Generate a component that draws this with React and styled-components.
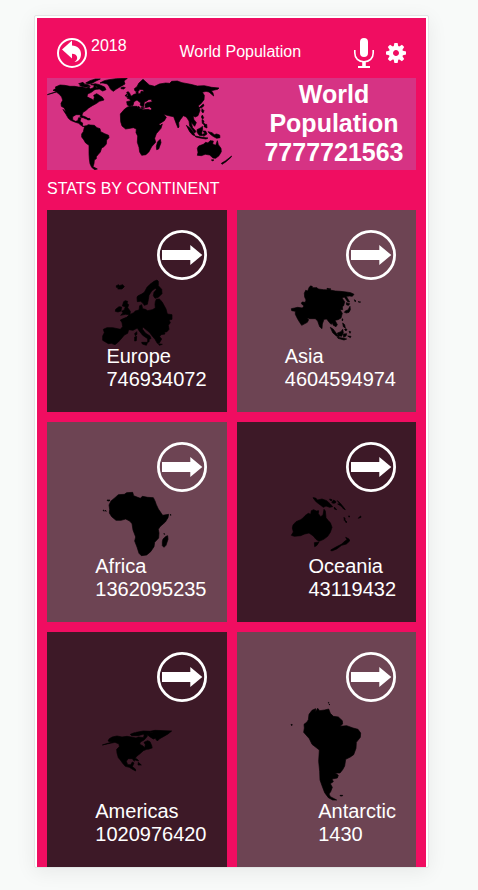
import React from 'react';
import styled, { createGlobalStyle } from 'styled-components';

const GlobalStyle = createGlobalStyle`
  * { box-sizing: border-box; }
  body {
    margin: 0;
    background: #f8faf9;
    color: #fff;
    font-family: "Liberation Sans", Arial, sans-serif;
  }
`;

const Page = styled.div`
  min-height: 100vh;
  padding: 15px 49px 22px 34px;
`;

const Frame = styled.div`
  height: calc(100vh - 37px);
  border: 1px solid #e2e5e4;
  border-radius: 2px;
  background: #fff;
  padding: 2px 2px 0;
  box-shadow: 0 4px 20px rgba(0, 0, 0, 0.07);
`;

const Screen = styled.main`
  height: 100%;
  overflow: hidden;
  padding: 0 10px;
  background: #f00d61;
`;

const Header = styled.header`
  display: flex;
  align-items: center;
  justify-content: space-between;
  padding: 20px 10px 10px;
  font-size: 16px;
  line-height: 18px;
`;

const BackLink = styled.a`
  display: flex;
  gap: 4px;
  color: inherit;
  line-height: 16px;
  text-decoration: none;
`;

const Title = styled.h1`
  margin: 0;
  padding-bottom: 2px;
  font-size: 16px;
  font-weight: 400;
`;

const Tools = styled.div`
  display: flex;
  align-items: center;
  gap: 12px;
`;

const IconButton = styled.button`
  display: block;
  padding: 0;
  border: 0;
  background: none;
  color: #fff;
  cursor: pointer;
`;

const Icon = styled.svg`
  display: block;
  flex: none;
  width: ${({ $w }) => $w}px;
  height: ${({ $h }) => $h}px;
`;

const Banner = styled.section`
  display: flex;
  align-items: center;
  background: #d63384;
`;

const BannerText = styled.h2`
  flex: 1;
  margin: 0;
  padding: 0 0 2px 20px;
  font-size: 25px;
  line-height: 29px;
  text-align: center;
`;

const BannerLine = styled.span`
  display: block;
`;

const SectionTitle = styled.h3`
  margin: 0;
  padding: 10px 0 12px;
  font-size: 16px;
  font-weight: 400;
  line-height: 18px;
`;

const Grid = styled.section`
  display: grid;
  grid-template-columns: 1fr 1fr;
  gap: 10px;
`;

const Card = styled.article`
  display: flex;
  flex-direction: column;
  justify-content: space-between;
  padding: 20px 20px 21px;
  background: ${({ $dark }) => ($dark ? '#3d1927' : '#6d4453')};
`;

const OpenButton = styled(IconButton)`
  align-self: flex-end;
`;

const MapShape = styled(Icon)`
  align-self: center;
  overflow: visible;
`;

const Land = styled.path`
  fill: #000;
  stroke: #000;
  stroke-width: 2;
  stroke-linejoin: round;
`;

const CardText = styled.div`
  align-self: flex-end;
  font-size: 20px;
  line-height: 23px;
`;

const Name = styled.h4`
  margin: 0;
  font-size: inherit;
  font-weight: 400;
`;

const Count = styled.p`
  margin: 0;
`;

const WORLD = `
M10 59L25 54L38 50L27 46L36 40L34 36L48 30L62 31L78 34L92 34L104 36L116 36L126 40L135 36L139 42L148 38L152 30L160 41L151 45L142 52L131 57L129 65L138 70L145 73L148 78L151 67L149 61L158 56L166 61L176 68L180 75L166 79L158 85L145 92L134 99L125 107L117 112L114 120L116 128L111 126L108 119L96 119L86 125L86 134L94 139L101 137L104 128L111 130L108 139L116 144L115 154L126 153L120 155L111 151L104 145L92 141L80 136L73 130L66 118L59 107L57 103L66 112L61 99L52 94L51 85L56 76L53 66L46 58L37 51Z
M107 32L118 27L132 29L139 34L125 37ZM104 26L117 22L121 27L110 30ZM125 24L138 17L154 12L169 12L156 18L144 25L135 27ZM140 29L154 26L166 29L182 36L186 44L176 48L166 42L158 43L160 36L151 31ZM163 67L173 66L176 73L167 74Z
M168 24L181 17L195 14L217 11L250 10L240 18L243 27L229 35L216 43L208 49L200 43L195 34L190 27L177 24Z
M230 39L237 36L244 38L239 42L232 41ZM107 126L117 123L127 127L134 132L126 132L115 127ZM129 132L137 130L139 134L131 135Z
M126 153L133 149L139 150L151 151L159 158L168 161L170 170L182 176L194 181L195 188L188 195L187 207L180 215L173 219L169 231L163 238L157 245L157 251L151 255L150 266L147 275L160 282L152 284L143 277L138 266L136 252L135 236L135 211L125 204L119 194L113 186L113 177L118 170L121 157Z
M229 117L242 102L251 96L262 94L279 94L283 99L299 104L313 103L324 108L330 127L340 146L349 151L355 147L351 160L337 176L332 190L335 202L323 215L315 230L306 239L293 241L287 231L285 217L280 202L281 183L276 173L277 162L268 158L258 160L245 162L234 153L230 140Z
M341 200L349 193L351 203L344 222L338 224L337 214Z
M250 90L248 80L260 77L257 72L250 70L258 65L264 62L270 58L277 56L276 51L282 50L283 57L290 55L291 49L299 50L299 45L288 43L282 50L273 48L271 41L279 35L284 25L297 13L316 30L332 34L346 27L365 24L377 25L383 19L400 18L414 23L440 28L460 33L481 32L503 37L525 39L521 43L502 47L507 54L509 63L495 51L486 49L475 52L481 61L480 74L470 87L463 92L468 106L462 122L454 126L447 123L450 134L457 143L452 154L441 142L446 158L456 169L452 174L437 153L435 138L427 126L418 122L409 134L404 143L405 156L402 159L396 144L389 125L378 123L366 120L359 118L367 127L361 137L341 150L334 140L324 115L318 109L323 101L317 95L304 98L303 88L309 83L325 80L321 73L314 74L307 79L301 81L299 95L291 93L288 87L291 85L279 75L270 80L267 91L256 94Z
M247 66L252 61L248 52L253 50L257 55L261 64L254 68ZM243 63L248 57L248 63ZM282 94L289 98L282 98ZM292 97L302 99L293 101Z
M478 87L480 92L473 98L465 99L471 93ZM474 101L480 107L477 114L473 109ZM475 120L479 128L476 133L472 126ZM474 134L480 138L478 145L484 147L482 151L475 145ZM482 150L488 148L489 159L480 155Z
M427 151L439 160L448 171L453 182L446 180L437 170ZM459 164L471 158L475 154L476 163L473 174L476 182L466 181L460 173ZM453 183L474 187L492 189L486 192L468 189L455 186ZM477 168L485 168L489 177L479 184L476 178L482 175ZM492 170L504 173L511 179L518 177L527 180L528 188L518 190L507 184L499 178Z
M460 220L464 213L478 208L485 202L492 204L498 197L508 198L506 207L515 211L520 197L523 209L531 220L532 230L525 242L515 250L507 249L497 240L484 238L472 242L460 241L462 232ZM503 254L510 255L504 258ZM532 265L545 257L563 243L560 248L545 261L534 268Z`;

const EUROPE = `
M64 191L71 188L73 191L83 188L88 194L81 201L68 201L71 197L64 196Z
M126 227L128 222L140 216L148 211L156 196L165 187L177 178L186 174L190 178L190 191L200 202L201 215L190 226L180 229L175 221L177 211L184 203L181 199L170 207L162 220L160 233L157 247L148 250L144 244L137 238L127 239Z
M86 239L91 236L98 238L96 244L101 248L98 257L106 268L105 278L91 277L77 280L84 272L80 268L88 263L91 254L82 252ZM62 262L72 254L80 255L78 267L69 270L61 268Z
M132 264L134 251L140 248L143 260L151 262L158 266L172 263L181 258L180 247L181 239L184 232L193 231L201 239L207 250L213 261L217 276L231 278L231 292L222 294L226 302L220 310L222 322L216 329L208 331L210 336L198 338L194 344L200 351L193 363L187 364L180 352L171 341L163 331L151 321L144 315L142 321L151 333L165 342L168 350L163 351L162 360L158 360L158 350L143 340L132 326L127 318L114 325L101 323L98 334L88 339L79 350L70 360L60 368L49 364L40 365L23 355L23 342L28 332L25 322L36 317L53 317L76 322L83 314L81 302L76 294L87 289L95 286L102 279L116 272L121 267Z
M140 361L158 361L154 370L142 366ZM119 335L125 329L126 337L121 341ZM119 345L125 343L124 356L119 357ZM190 365L202 367L193 370Z`;

const ASIA = `
M88 194L94 192L98 196L111 196L115 200L130 202L150 203L166 206L181 207L199 209L212 211L222 216L217 222L209 221L199 222L203 229L209 239L203 238L193 224L186 227L194 238L191 250L187 253L188 262L180 262L187 273L183 287L174 292L165 294L172 307L168 313L160 309L157 303L153 306L147 299L140 290L132 291L127 305L126 319L119 313L113 296L106 289L90 289L80 286L86 292L82 300L65 309L59 300L53 290L46 276L46 267L35 265L34 259L44 257L53 255L67 257L72 251L64 244L66 239L76 240L78 233L74 224L73 213L77 204L83 206Z
M90 191L96 192L98 194L91 194ZM141 198L153 200L149 202L141 201ZM199 241L209 244L206 249L200 248ZM197 265L204 263L210 252L211 262L207 270L199 272L193 270ZM186 289L189 291L187 296ZM188 302L194 307L196 317L190 313ZM196 319L201 321L198 326L194 322ZM151 315L160 321L171 336L178 344L169 341L158 331ZM172 332L183 328L188 321L190 331L185 342L175 340ZM172 345L187 347L200 350L192 353L174 348ZM190 335L200 334L198 341L191 345ZM207 327L212 328L210 333ZM203 341L213 342L211 346ZM223 232L228 236L225 238ZM234 238L242 239L239 240Z`;

const AFRICA = `
M70 194L88 193L95 188L113 187L116 197L128 202L136 205L142 199L158 202L175 203L180 213L184 224L190 237L199 250L203 256L221 253L219 263L211 276L195 290L190 298L192 309L191 324L179 337L177 350L167 365L155 375L139 377L132 370L126 351L119 333L122 321L114 300L111 281L104 273L92 267L78 271L63 271L50 260L43 249L44 238L42 225L48 213L60 203Z
M204 327L213 319L218 317L219 328L213 346L207 352L202 347L202 335ZM36 210L45 210L43 213L38 213ZM24 241L27 240L27 244ZM31 240L34 244L31 243ZM227 253L228 256L225 255ZM207 310L209 313L207 313Z`;

const OCEANIA = `
M39 285L48 275L62 269L69 264L75 257L85 250L92 253L94 242L101 239L109 243L116 242L115 251L122 260L129 255L132 238L136 243L138 263L143 270L151 278L156 292L151 307L143 319L131 328L117 334L108 328L100 318L87 309L74 312L62 317L43 319L34 316L40 306L37 294Z
M103 338L117 336L111 346L104 350ZM99 203L107 204L112 210L117 209L126 207L140 212L150 221L158 230L149 232L138 228L130 232L121 225L109 216L104 210ZM149 207L156 209L155 212L150 211ZM161 210L168 215L166 219L159 220L155 217ZM172 212L182 221L190 231L196 239L191 237L183 228L173 222L179 221ZM163 231L170 239L163 237ZM192 262L196 267L193 271ZM194 270L201 276L198 278ZM207 257L209 261L206 261ZM242 258L243 262L235 265L239 260ZM152 360L168 351L184 343L195 333L201 329L197 322L207 327L209 333L199 342L185 346L170 357L155 363Z`;

const AMERICAS = `
M22 302L35 298L54 292L45 292L39 290L43 283L52 278L66 275L81 278L96 276L108 278L123 281L131 278L145 280L149 269L158 274L152 282L146 288L136 293L134 300L143 304L149 310L151 301L147 294L158 289L165 292L171 306L164 314L155 315L145 319L135 328L126 335L119 344L118 351L112 343L99 343L94 351L98 361L107 361L112 353L117 356L112 367L121 374L122 380L111 374L103 369L91 366L83 357L76 347L70 340L66 326L65 315L73 307L72 299L60 294L40 298Z
M106 270L118 265L134 265L143 270L130 274L110 274ZM124 264L145 260L165 261L151 267L139 269ZM145 266L164 263L181 269L187 279L175 284L164 277L157 271L146 271ZM165 261L180 258L207 259L230 260L219 269L205 277L194 283L187 290L182 284L184 277L176 267ZM115 342L126 344L131 350L120 347ZM130 354L139 362L129 362ZM157 309L168 306L172 311L160 313Z`;

const SOUTH = `
M87 73L96 61L107 56L107 65L113 55L119 62L134 60L146 57L151 70L160 79L175 81L187 92L188 102L180 109L200 107L219 114L234 118L242 129L241 142L229 157L228 175L221 194L211 201L197 208L194 228L188 239L180 249L166 249L175 256L172 264L156 267L160 275L151 281L157 292L152 305L147 312L151 320L170 330L158 330L145 323L134 308L126 287L120 270L119 244L116 214L118 180L96 163L88 146L71 127L73 114L72 103L81 96L85 89Z
M33 103L37 104L35 107ZM145 37L147 38L146 40ZM148 42L149 45L148 45ZM180 316L188 316L187 318L181 318Z`;

const continents = [
  { name: 'Europe', count: '746934072', dark: true, h: 65, box: '21 174 210 195', d: EUROPE },
  { name: 'Asia', count: '4604594974', dark: false, h: 54, box: '33 191 210 162', d: ASIA },
  { name: 'Africa', count: '1362095235', dark: false, h: 63, box: '21 186 210 189', d: AFRICA },
  { name: 'Oceania', count: '43119432', dark: true, h: 54, box: '33 201 210 162', d: OCEANIA },
  { name: 'Americas', count: '1020976420', dark: true, h: 42, box: '21 257 210 126', d: AMERICAS },
  { name: 'Antarctic', count: '1430', dark: false, h: 98, box: '33 36 210 294', d: SOUTH },
];

function BackIcon() {
  return (
    <Icon $w={30} $h={30} viewBox="0 0 30 30" fill="none" aria-hidden="true">
      <circle cx="15" cy="15" r="14" stroke="#fff" strokeWidth="2" />
      <path fill="#fff" d="M5 11.5L15 2.5V7.5C20.5 7.7 24 11 24 16C24 20.5 21.7 23.5 17.5 24C19.8 22.6 20.6 20.8 20 18.8C19.3 16.8 17.8 15.8 15 15.8V20.5Z" />
    </Icon>
  );
}

function MicIcon() {
  return (
    <Icon $w={20} $h={30} viewBox="0 0 20 30" fill="none" aria-hidden="true">
      <rect x="6" width="8" height="19" rx="4" fill="#fff" />
      <path d="M.8 12V15C.8 20.3 4.5 23.7 10 23.7S19.2 20.3 19.2 15V12" stroke="#fff" strokeWidth="1.6" />
      <path d="M8.2 24H11.8V28H16V30H4V28H8.2Z" fill="#fff" />
    </Icon>
  );
}

function GearIcon() {
  return (
    <Icon $w={20} $h={20} viewBox="-10 -10 20 20" aria-hidden="true">
      <g fill="#fff">
        {[0, 45, 90, 135].map((a) => (
          <path key={a} transform={`rotate(${a})`} d="M-2.4 -6L-1.6 -10H1.6L2.4 -6V-4H-2.4ZM-2.4 6L-1.6 10H1.6L2.4 6V4H-2.4Z" />
        ))}
      </g>
      <circle r="5.1" fill="none" stroke="#fff" strokeWidth="4.2" />
    </Icon>
  );
}

function ArrowIcon() {
  return (
    <Icon $w={50} $h={50} viewBox="0 0 50 50" aria-hidden="true">
      <circle cx="25" cy="25" r="23.6" fill="none" stroke="#fff" strokeWidth="2.8" />
      <path d="M5 20H33.3V15L45.3 25L33.3 35V30H5Z" fill="#fff" />
    </Icon>
  );
}

export default function App() {
  return (
    <Page>
      <GlobalStyle />
      <Frame>
        <Screen>
          <Header>
            <BackLink href="#back">
              <BackIcon />
              2018
            </BackLink>
            <Title>World Population</Title>
            <Tools>
              <IconButton type="button" aria-label="Voice search">
                <MicIcon />
              </IconButton>
              <IconButton type="button" aria-label="Settings">
                <GearIcon />
              </IconButton>
            </Tools>
          </Header>
          <Banner>
            <Icon $w={185} $h={92} viewBox="9 9 555 276" aria-hidden="true">
              <Land d={WORLD} />
            </Icon>
            <BannerText>
              <BannerLine>World</BannerLine>
              <BannerLine>Population</BannerLine>
              <BannerLine>7777721563</BannerLine>
            </BannerText>
          </Banner>
          <SectionTitle>STATS BY CONTINENT</SectionTitle>
          <Grid>
            {continents.map((c) => (
              <Card key={c.name} $dark={c.dark}>
                <OpenButton type="button" aria-label={`Open ${c.name}`}>
                  <ArrowIcon />
                </OpenButton>
                <MapShape $w={70} $h={c.h} viewBox={c.box} aria-hidden="true">
                  <Land d={c.d} />
                </MapShape>
                <CardText>
                  <Name>{c.name}</Name>
                  <Count>{c.count}</Count>
                </CardText>
              </Card>
            ))}
          </Grid>
        </Screen>
      </Frame>
    </Page>
  );
}
